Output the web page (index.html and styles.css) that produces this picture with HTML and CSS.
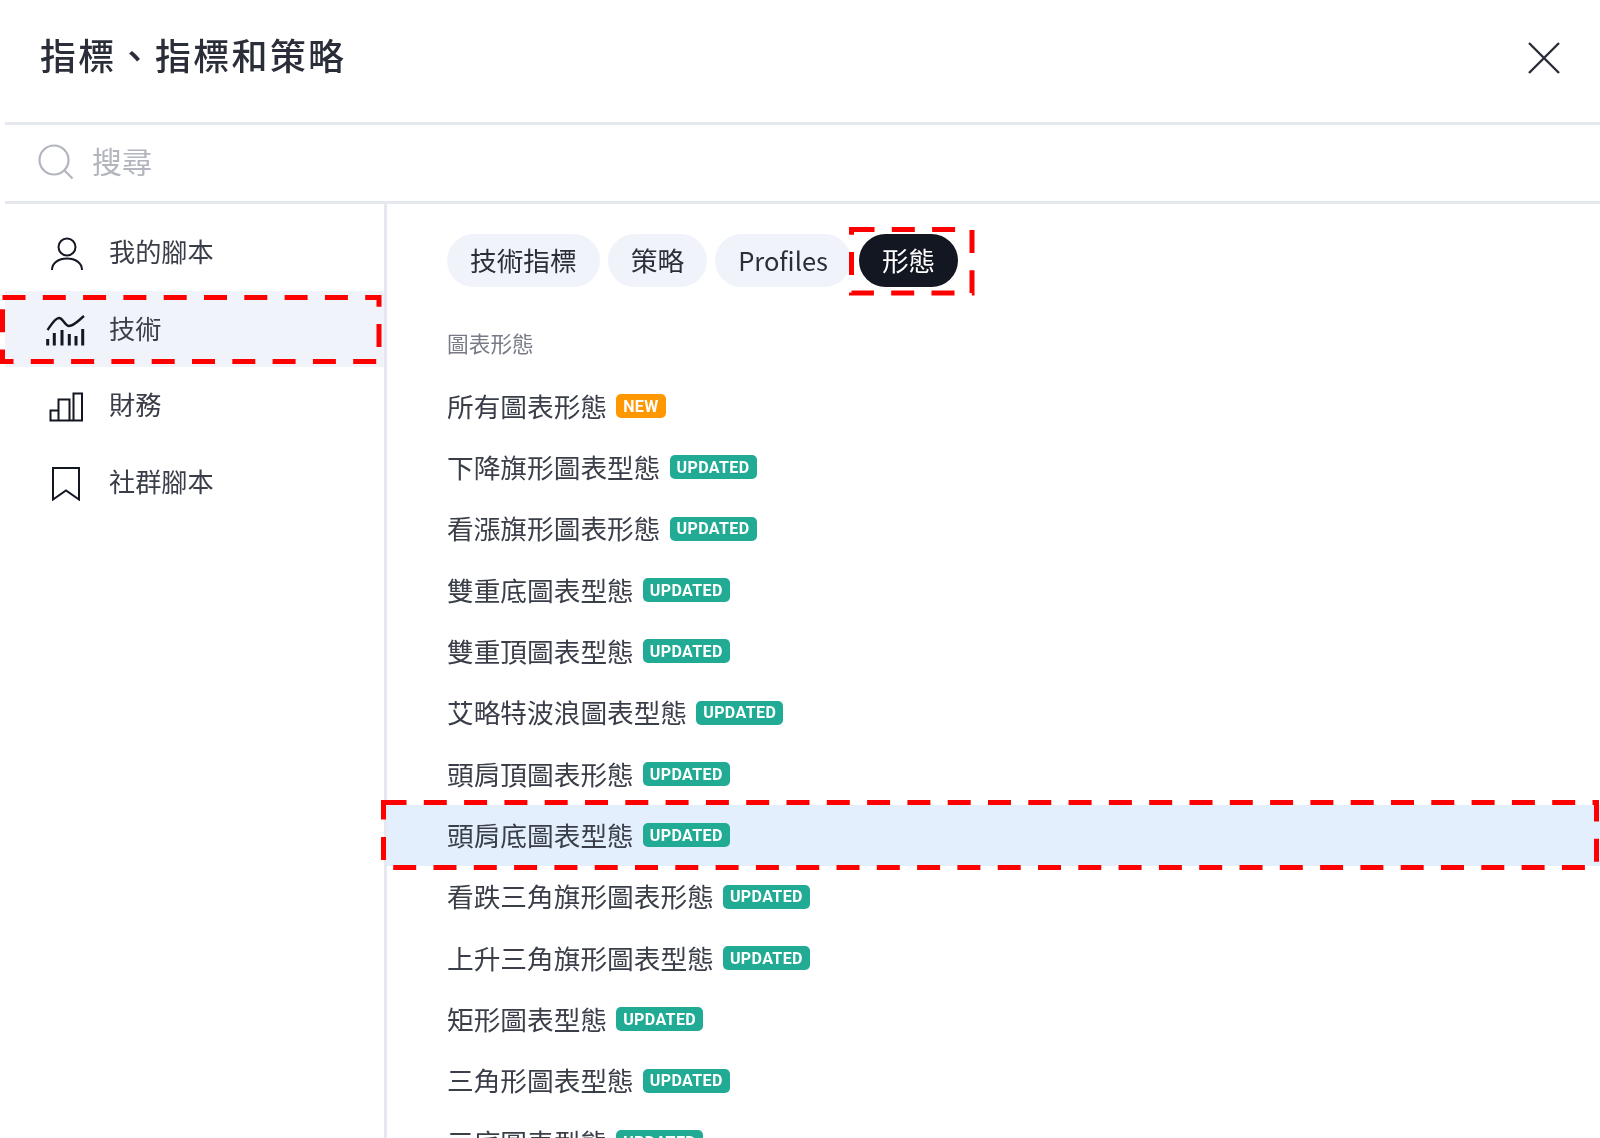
FILE: index.html
```html
<!DOCTYPE html>
<html lang="zh-Hant">
<head>
<meta charset="utf-8">
<title>指標、指標和策略</title>
<link rel="stylesheet" href="styles.css">
</head>
<body>
<div class="dialog">
  <header class="header">
    <h1 class="title">指標、指標和策略</h1>
    <svg class="close" viewBox="0 0 32 32"><path d="M1 1L31 31M31 1L1 31"/></svg>
  </header>
  <div class="search">
    <svg class="search-icon" viewBox="0 0 36 36"><circle cx="16" cy="16" r="14.5"/><path d="M26.5 26.5L34.5 34.5"/></svg>
    <span class="search-text">搜尋</span>
  </div>
  <div class="content">
    <nav class="sidebar">
      <div class="side-item">
        <span class="side-icon"><svg class="i-person" viewBox="0 0 34 34"><circle cx="17" cy="10" r="8.5"/><path d="M2 33C2 26 8.5 21.5 17 21.5S32 26 32 33"/></svg></span>
        <span class="side-label">我的腳本</span>
      </div>
      <div class="side-item active">
        <span class="side-icon"><svg class="i-tech" viewBox="0 0 40 32"><path d="M1.5 15C5 10 9 3 13 3C17 3 19 11 23 11C28 11 33 5 38 1"/><path class="thick" d="M1.7 30.5V24M8.3 30.5V18M16 30.5V15M23.3 30.5V19M30 30.5V21M36.7 30.5V14"/></svg></span>
        <span class="side-label">技術</span>
        <svg class="mark mark-side" viewBox="0 0 384 76"><rect x="2.5" y="6.5" width="376.5" height="64"/></svg>
      </div>
      <div class="side-item">
        <span class="side-icon"><svg class="i-fin" viewBox="0 0 34 30"><path d="M1.500 28.500V18.500H9.500V28.500ZM9.500 28.500V7.500H20.500V28.500M24.500 28.500V1.500H33V28.500H1.500"/></svg></span>
        <span class="side-label">財務</span>
      </div>
      <div class="side-item">
        <span class="side-icon"><svg class="i-book" viewBox="0 0 28 34"><path d="M1 1H27V32.500L14 23.500L1 32.500Z"/></svg></span>
        <span class="side-label">社群腳本</span>
      </div>
    </nav>
    <main class="main">
      <div class="tabs">
        <span class="tab">技術指標</span>
        <span class="tab">策略</span>
        <span class="tab latin">Profiles</span>
        <span class="tab selected">形態
          <svg class="mark mark-tab" viewBox="0 0 126 69"><rect x="2.500" y="2.500" width="120.500" height="63.500"/></svg>
        </span>
      </div>
      <div class="section-label">圖表形態</div>
      <ul class="list">
        <li class="row"><span class="row-text">所有圖表形態</span><span class="badge new">NEW</span></li>
        <li class="row"><span class="row-text">下降旗形圖表型態</span><span class="badge">UPDATED</span></li>
        <li class="row"><span class="row-text">看漲旗形圖表形態</span><span class="badge">UPDATED</span></li>
        <li class="row"><span class="row-text">雙重底圖表型態</span><span class="badge">UPDATED</span></li>
        <li class="row"><span class="row-text">雙重頂圖表型態</span><span class="badge">UPDATED</span></li>
        <li class="row"><span class="row-text">艾略特波浪圖表型態</span><span class="badge">UPDATED</span></li>
        <li class="row"><span class="row-text">頭肩頂圖表形態</span><span class="badge">UPDATED</span></li>
        <li class="row hover"><span class="row-text">頭肩底圖表型態</span><span class="badge">UPDATED</span>
          <svg class="mark mark-row" viewBox="0 0 1221 70"><rect x="2.500" y="2.500" width="1213" height="65"/></svg>
        </li>
        <li class="row"><span class="row-text">看跌三角旗形圖表形態</span><span class="badge">UPDATED</span></li>
        <li class="row"><span class="row-text">上升三角旗形圖表型態</span><span class="badge">UPDATED</span></li>
        <li class="row"><span class="row-text">矩形圖表型態</span><span class="badge">UPDATED</span></li>
        <li class="row"><span class="row-text">三角形圖表型態</span><span class="badge">UPDATED</span></li>
        <li class="row"><span class="row-text">三底圖表型態</span><span class="badge">UPDATED</span></li>
      </ul>
    </main>
  </div>
</div>
</body>
</html>
```
FILE: styles.css
```css
* { box-sizing: border-box; }
html, body { margin: 0; padding: 0; }
body {
  width: 1600px;
  height: 1138px;
  overflow: hidden;
  background: #fff;
  color: #2a2e39;
  font-family: "Noto Sans CJK TC", "Noto Sans", sans-serif;
}
svg { display: block; fill: none; stroke: #131722; stroke-width: 2; }

.dialog { display: flex; flex-direction: column; height: 1138px; padding-left: 5px; filter: blur(0.45px); }

.header {
  height: 125px;
  flex: none;
  display: flex;
  align-items: flex-start;
  justify-content: space-between;
  padding: 28px 40px 0 35px;
  border-bottom: 3px solid #e6e8ef;
}
.title { margin: 0; font-size: 36px; line-height: 52px; font-weight: 500; letter-spacing: 2.300px; color: #2a2e39; }
.close { width: 32px; height: 32px; margin-top: 14px; stroke: #2a2e39; stroke-width: 2.4; }

.search {
  height: 79px;
  flex: none;
  display: flex;
  align-items: center;
  border-bottom: 3px solid #e6e8ef;
  padding: 0 0 2px 33px;
  gap: 18px;
}
.search-icon { width: 36px; height: 36px; stroke: #b2b5be; stroke-width: 2.2; }
.search-text { font-size: 30px; color: #b2b5be; line-height: 40px; margin-top: -4px; }

.content { flex: 1; display: flex; min-height: 0; }

.sidebar {
  width: 382px;
  flex: none;
  border-right: 3px solid #e6e8ef;
  padding-top: 10px;
}
.side-item {
  position: relative;
  height: 76.500px;
  display: flex;
  align-items: center;
  padding-left: 40px;
  gap: 23px;
  font-size: 26.200px;
  color: #3a3e49;
}
.side-item.active { background: #f0f3fa; }
.side-label { margin-top: -2px; }
.side-icon { width: 41px; display: flex; justify-content: center; padding-top: 4px; }
.i-person { width: 34px; height: 34px; margin-left: 2px; }
.i-tech { width: 40px; height: 32px; stroke-width: 2.400; }
.i-tech .thick { stroke-width: 3; }
.i-fin { width: 34px; height: 30px; }
.i-book { width: 28px; height: 34px; }

.mark { position: absolute; stroke: #f00; stroke-width: 5; stroke-dasharray: 23 17.300; pointer-events: none; }
.mark-side { left: -5px; top: 0; width: 384px; height: 76px; }
.mark-tab { left: -10px; top: -7.500px; width: 126px; height: 69px; }
.mark-row { left: -6px; top: -5px; width: 1221px; height: 70px; }

.main { flex: 1; min-width: 0; }

.tabs { display: flex; gap: 8px; padding: 30px 0 0 60px; }
.tab {
  position: relative;
  height: 53px;
  display: flex;
  align-items: center;
  padding: 0 23px 3px;
  border-radius: 27px;
  background: #f0f3fa;
  font-size: 26.700px;
  color: #2a2e39;
}
.tab.latin { font-size: 25.500px; }
.tab.selected { background: #131722; color: #fff; }

.section-label {
  margin: 40px 0 0 60px;
  font-size: 21.700px;
  line-height: 32px;
  color: #787b86;
}
.list { list-style: none; margin: 16.500px 0 0; padding: 0; }
.row {
  position: relative;
  height: 61.330px;
  display: flex;
  align-items: center;
  padding-left: 60px;
  gap: 9px;
  font-size: 26.700px;
  color: #3a3e49;
}
.row.hover { background: #e3effd; }
.row-text { margin-top: -2px; }
.badge {
  height: 24px;
  display: flex;
  align-items: center;
  padding: 0 7px;
  border-radius: 5px;
  background: #22ab94;
  color: #fff;
  font-family: "Roboto", sans-serif;
  font-size: 16px;
  font-weight: 700;
  letter-spacing: 0.4px;
}
.badge.new { background: #ff9800; }
```
